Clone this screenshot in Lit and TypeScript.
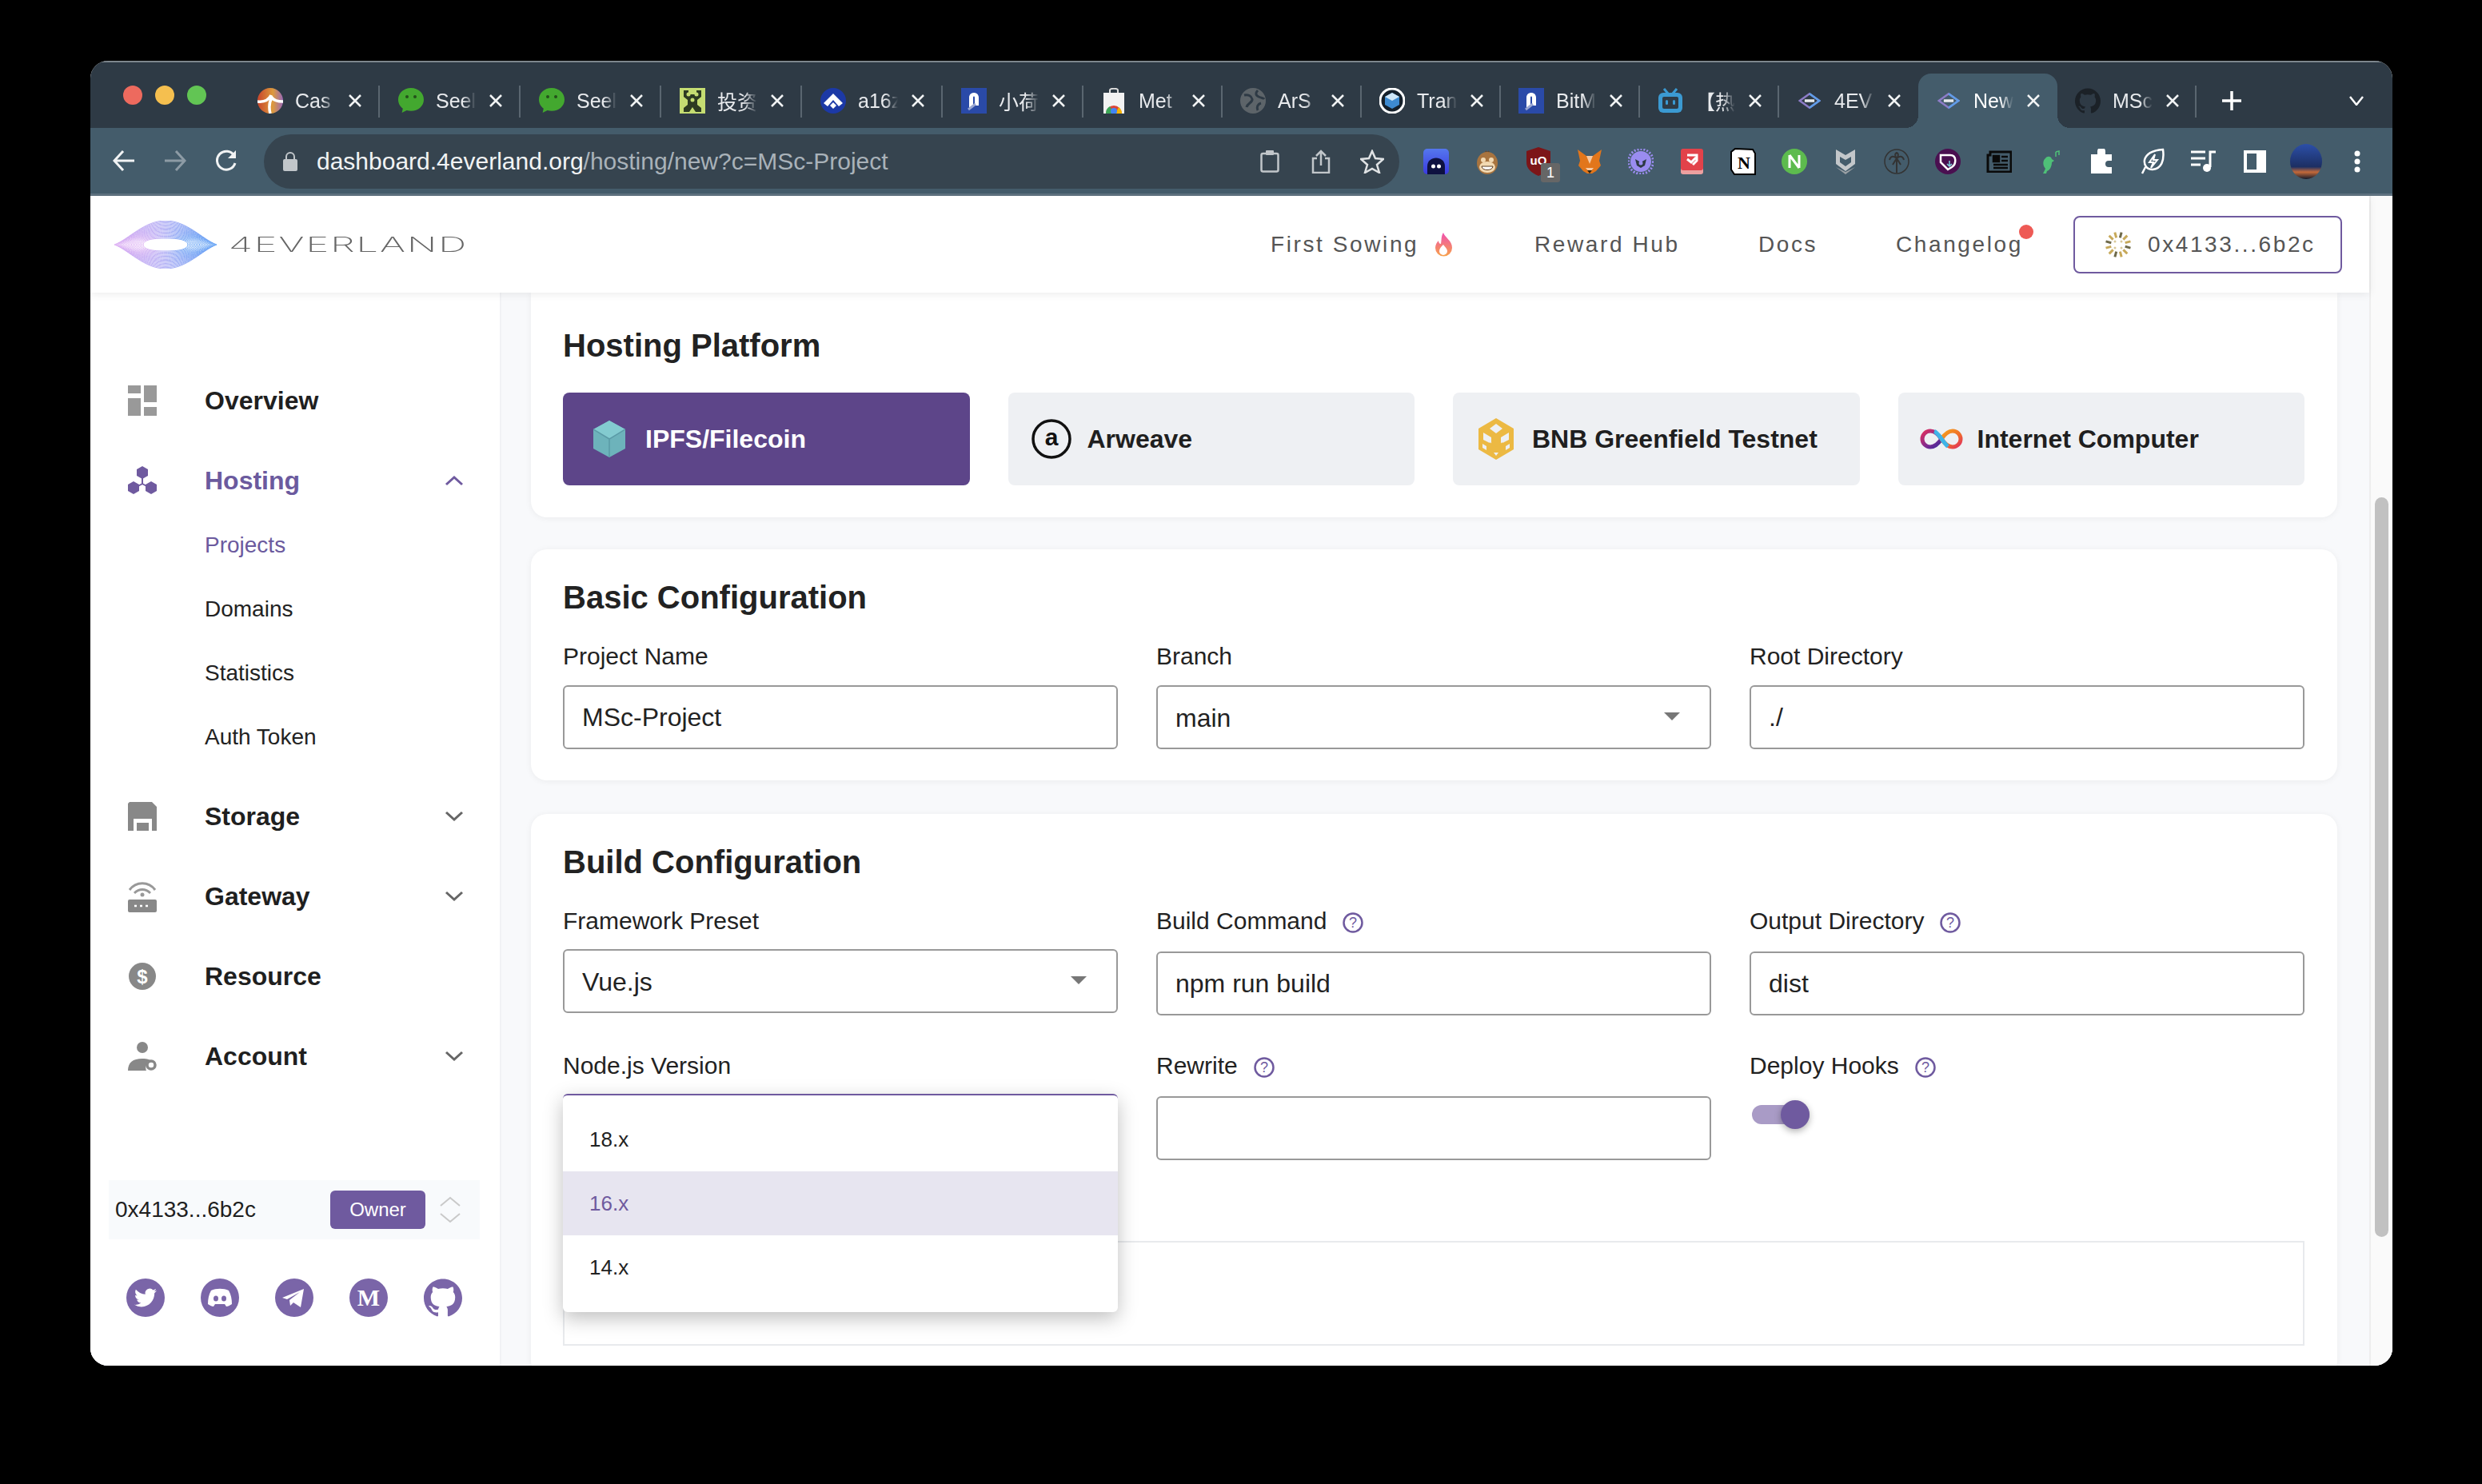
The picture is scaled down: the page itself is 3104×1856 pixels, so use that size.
import { LitElement, css, html, svg } from "lit";
import { customElement } from "lit/decorators.js";

// Tab favicons, all drawn on a 32 box
const wechat = () =>
  html`<svg viewBox="0 0 32 32" width="32" height="32"><path d="M16 0C7 0 0 6.300 0 14.500c0 4.600 2.300 8.700 5.800 11.300L4.600 31l6-3c1.700.5 3.500.8 5.400.8 9 0 16-6.200 16-14.300S25 0 16 0z" fill="#43a82f"/><circle cx="11" cy="11" r="2" fill="#24511b"/><circle cx="21" cy="11" r="2" fill="#24511b"/></svg>`;
const blueZero = () =>
  html`<svg viewBox="0 0 32 32" width="32" height="32"><rect width="32" height="32" fill="#2a4aa8"/><path d="M10 24V12c0-8 12-8 12 0v10h-5V12c0-2-2-2-2 0v12z" fill="#fff"/><path d="M9 27l9-7" stroke="#9aa7d2" stroke-width="3"/></svg>`;
const evDiamond = () =>
  html`<svg viewBox="0 0 32 32" width="28" height="32"><path d="M2 16L16 6l14 10-14 10z" fill="none" stroke="#8d7cc7" stroke-width="3"/><path d="M16 6l14 10-14 10" fill="none" stroke="#5f9de8" stroke-width="3"/><rect x="9" y="14" width="14" height="4" fill="#e8eaed"/></svg>`;

const tabs = [
  {
    label: "Cas",
    icon: html`<svg viewBox="0 0 32 32" width="32" height="32"><defs><linearGradient id="cs" x1="0" x2="1"><stop offset="0" stop-color="#c8452c"/><stop offset=".6" stop-color="#dd9a3c"/><stop offset="1" stop-color="#9a68b8"/></linearGradient></defs><circle cx="16" cy="16" r="16" fill="url(#cs)"/><path d="M0 17c8 1 14-2 17-8M16 32c-2-8-1-15 2-20 2 3 7 5 14 5" fill="none" stroke="#fff" stroke-width="3.500"/></svg>`,
  },
  { label: "Seel", icon: wechat() },
  { label: "Seel", icon: wechat() },
  {
    label: "投资",
    icon: html`<svg viewBox="0 0 32 32" width="32" height="32"><rect width="32" height="32" fill="#c5dd72"/><path d="M5 3h6v5h10V3h6v8l-5 4v6l5 4v5h-7l-4-6-4 6H5v-5l5-4v-6l-5-4z" fill="#2d3b22"/><circle cx="11" cy="8" r="2.500" fill="#c5dd72"/><circle cx="21" cy="8" r="2.500" fill="#c5dd72"/><circle cx="16" cy="15" r="2.500" fill="#c5dd72"/></svg>`,
  },
  {
    label: "a16z",
    icon: html`<svg viewBox="0 0 32 32" width="32" height="32"><circle cx="16" cy="16" r="16" fill="#1c39a6"/><path d="M4 19L16 7l12 12-5 4-7-8-7 8z" fill="#fff"/><path d="M12 22l4-4 4 4-4 4z" fill="#fff"/></svg>`,
  },
  { label: "小荷", icon: blueZero() },
  {
    label: "Met",
    icon: html`<svg viewBox="0 0 32 32" width="32" height="32"><path d="M11 6V3c0-3 10-3 10 0v3" fill="none" stroke="#ddd" stroke-width="2"/><rect x="3" y="6" width="26" height="26" fill="#f2f2f2"/><path d="M6 32a10 10 0 0 1 20 0z" fill="#db4437"/><path d="M6 32a10 10 0 0 1 5-9l5 9z" fill="#3aa757"/><path d="M26 32a10 10 0 0 0-4-8l-4 8z" fill="#f4b400"/><circle cx="16" cy="29" r="4" fill="#4285f4"/></svg>`,
  },
  {
    label: "ArS",
    icon: html`<svg viewBox="0 0 32 32" width="32" height="32"><circle cx="16" cy="16" r="16" fill="#5d6469"/><path d="M5 9c5-1 9 1 10 5s-6 5-7 10M22 3c-3 3-3 6 1 8s6 1 7 3M22 28c-2-4 0-8 4-9" fill="none" stroke="#2e3a45" stroke-width="3"/></svg>`,
  },
  {
    label: "Tran",
    icon: html`<svg viewBox="0 0 32 32" width="32" height="32"><circle cx="16" cy="16" r="15" fill="#15202b" stroke="#fff" stroke-width="3"/><path d="M16 6l9 5v10l-9 5-9-5V11z" fill="#3d8ad0"/><path d="M16 6l9 5-9 5-9-5z" fill="#cfe6f7"/></svg>`,
  },
  { label: "BitM", icon: blueZero() },
  {
    label: "【热",
    icon: html`<svg viewBox="0 0 32 32" width="32" height="32"><path d="M8 1l5 6M24 1l-5 6" stroke="#3b9ad2" stroke-width="3"/><rect x="1" y="6" width="30" height="25" rx="6" fill="#3b9ad2"/><rect x="6" y="11" width="20" height="15" rx="2" fill="#2e3a45"/><rect x="10" y="15" width="3" height="6" rx="1.500" fill="#3b9ad2"/><rect x="19" y="15" width="3" height="6" rx="1.500" fill="#3b9ad2"/></svg>`,
  },
  { label: "4EV", icon: evDiamond() },
  { label: "New", icon: evDiamond(), active: true },
  {
    label: "MSc",
    icon: html`<svg viewBox="0 0 24 24" width="32" height="32"><path fill="#1b2127" d="M12 .297c-6.630 0-12 5.373-12 12 0 5.303 3.438 9.800 8.205 11.385.6.113.82-.258.82-.577 0-.285-.01-1.040-.015-2.040-3.338.724-4.042-1.610-4.042-1.610C4.422 18.070 3.633 17.700 3.633 17.700c-1.087-.744.084-.729.084-.729 1.205.084 1.838 1.236 1.838 1.236 1.070 1.835 2.809 1.305 3.495.998.108-.776.417-1.305.76-1.605-2.665-.3-5.466-1.332-5.466-5.930 0-1.310.465-2.380 1.235-3.220-.135-.303-.54-1.523.105-3.176 0 0 1.005-.322 3.300 1.230.96-.267 1.980-.399 3-.405 1.020.006 2.040.138 3 .405 2.280-1.552 3.285-1.230 3.285-1.230.645 1.653.24 2.873.12 3.176.765.84 1.230 1.910 1.230 3.220 0 4.610-2.805 5.625-5.475 5.920.42.36.81 1.096.81 2.220 0 1.606-.015 2.896-.015 3.286 0 .315.21.69.825.57C20.565 22.092 24 17.592 24 12.297c0-6.627-5.373-12-12-12"/></svg>`,
  },
];

// Browser extension icons, in toolbar order
const extensions = [
  html`<svg viewBox="0 0 32 32" width="32" height="32"><defs><linearGradient id="gh" x1="0" y1="0" x2="0" y2="1"><stop offset="0" stop-color="#5577ee"/><stop offset="1" stop-color="#3a3ae0"/></linearGradient></defs><rect width="32" height="32" rx="5" fill="url(#gh)"/><path d="M5 32V22c0-14 22-14 22 0v10z" fill="#0e1140"/><circle cx="12.500" cy="22" r="2.500" fill="#fff"/><circle cx="19.500" cy="22" r="2.500" fill="#fff"/></svg>`,
  html`<svg viewBox="0 0 32 32" width="32" height="32"><path d="M14 3l2 4 2-4" stroke="#6a4526" stroke-width="2" fill="none"/><ellipse cx="16" cy="18" rx="13" ry="14" fill="#a8743f"/><ellipse cx="16" cy="23" rx="10" ry="7" fill="#f2d9b2"/><circle cx="11" cy="14" r="3" fill="#f2d9b2"/><circle cx="21" cy="14" r="3" fill="#f2d9b2"/><path d="M9 22h14c0 6-14 6-14 0z" fill="#fff" stroke="#5a3a1e"/></svg>`,
  html`<div class="ublock"><svg viewBox="0 0 30 36" width="30" height="36"><path d="M15 0l15 5v14c0 8-6 13-15 17C6 32 0 27 0 19V5z" fill="#7c1518"/><text x="15" y="22" class="ub-text">uO</text></svg><span class="ub-badge">1</span></div>`,
  html`<svg viewBox="0 0 32 32" width="32" height="32"><path d="M1 1l11 8h8l11-8-3 14 2 6-6 7-5 3h-6l-5-3-6-7 2-6z" fill="#e2761b"/><path d="M12 9l4 10 4-10zM11 24l5 6 5-6z" fill="#f6c9a2"/><path d="M13 27h6l-3 4z" fill="#33240f"/></svg>`,
  html`<svg viewBox="0 0 32 32" width="32" height="32"><circle cx="16" cy="16" r="13" fill="#9a8cf0"/><circle cx="16" cy="16" r="15.500" fill="none" stroke="#9a8cf0" stroke-width="3" stroke-dasharray="2 2"/><path d="M9 13l7 4 7-4-2 8-5 3-5-3z" fill="#2e3a45"/><circle cx="16" cy="18" r="2.500" fill="#9a8cf0"/></svg>`,
  html`<svg viewBox="0 0 28 32" width="28" height="32"><rect y="4" width="28" height="28" rx="3" fill="#eca0a0"/><rect width="28" height="27" rx="3" fill="#e2424a"/><path d="M8 8h12v7l-5 5M8 13l5 4 6-6" fill="none" stroke="#fff" stroke-width="3"/></svg>`,
  html`<svg viewBox="0 0 32 34" width="32" height="34"><path d="M6 1l22 1 3 5v26H5l-4-6V5z" fill="#fff" stroke="#000" stroke-width="2"/><text x="17" y="26" class="notion-text">N</text></svg>`,
  html`<svg viewBox="0 0 32 32" width="32" height="32"><circle cx="16" cy="16" r="16" fill="#5dbb4e"/><path d="M10 8v16M10 8l12 16M22 8v16" stroke="#fff" stroke-width="3" fill="none"/></svg>`,
  html`<svg viewBox="0 0 24 32" width="24" height="32"><path d="M0 1l12 7 12-7v18l-12 9L0 19z" fill="#c3c7ca"/><path d="M5 10l7 4 7-4v7l-7 5-7-5z" fill="#445c6b"/><path d="M0 23l12 9 12-9-12 6z" fill="#9aa0a4"/></svg>`,
  html`<svg viewBox="0 0 32 32" width="32" height="32"><circle cx="16" cy="16" r="15" fill="none" stroke="#333" stroke-width="1.500"/><path d="M16 30V12M16 12c-5-4-8-2-9 2M16 12c5-4 8-2 9 2M16 12c-3-4-2-6 0-7 2 1 3 3 0 7M16 12l-5 8M16 12l5 8" fill="none" stroke="#333" stroke-width="2"/></svg>`,
  html`<svg viewBox="0 0 32 32" width="32" height="32"><circle cx="16" cy="16" r="16" fill="#4a0f50"/><path d="M7 8h12c8 0 8 11 2 15l-5 3-9-9z" fill="none" stroke="#fff" stroke-width="2.500"/><path d="M18 15v7M15 19l3 3 3-3" fill="none" stroke="#7fd4e0" stroke-width="1.500"/></svg>`,
  html`<svg viewBox="0 0 32 28" width="32" height="28"><path d="M5 2h26v25H2V6h3z" fill="none" stroke="#0a0a0a" stroke-width="3"/><path d="M9 7h7v7H9zM19 8h8M19 13h8M9 18h18M9 22h18" stroke="#0a0a0a" stroke-width="2.500" fill="#0a0a0a"/></svg>`,
  html`<svg viewBox="0 0 26 30" width="26" height="30"><path d="M4 30l3-6c-4-5-3-11 0-13 2-3 7-3 8 1l3 2-3 2c0 6-3 10-6 11l-1 3z" fill="#4fc078"/><path d="M20 3v6M20 3l4-1v5" stroke="#4fc078" stroke-width="1.500" fill="none"/></svg>`,
  html`<svg viewBox="0 0 30 32" width="30" height="32"><path d="M10 8V4a5 5 0 0 1 10 0v4h8v8h-4a4 4 0 0 0 0 8h4v8H2V8z" transform="translate(0 -1)" fill="#fff"/></svg>`,
  html`<svg viewBox="0 0 30 34" width="30" height="34"><path d="M28 2c2 14-2 24-13 25C8 27 4 22 5 15 7 7 16 3 28 2zM6 24l-4 8" fill="none" stroke="#fff" stroke-width="2.500"/><path d="M18 8l-7 10h5l-3 7 8-10h-5z" fill="none" stroke="#fff" stroke-width="2"/></svg>`,
  html`<svg viewBox="0 0 32 30" width="32" height="30"><path d="M0 3h18M0 11h18M0 19h12" stroke="#fff" stroke-width="3"/><path d="M24 22V3h7" stroke="#fff" stroke-width="3" fill="none"/><circle cx="20" cy="23" r="5" fill="#fff"/></svg>`,
  html`<svg viewBox="0 0 28 28" width="28" height="28"><rect width="28" height="28" fill="#fff"/><rect x="4" y="4" width="12" height="20" fill="#445c6b"/></svg>`,
  html`<svg viewBox="0 0 40 44" width="40" height="44"><defs><linearGradient id="av" x1="0" y1="0" x2="0" y2="1"><stop offset="0" stop-color="#2c4fa8"/><stop offset=".65" stop-color="#1c2f63"/><stop offset=".8" stop-color="#c46a3a"/><stop offset="1" stop-color="#131a2c"/></linearGradient></defs><ellipse cx="20" cy="22" rx="20" ry="22" fill="url(#av)"/></svg>`,
  html`<svg viewBox="0 0 8 28" width="8" height="28"><circle cx="4" cy="4" r="3.500" fill="#fff"/><circle cx="4" cy="14" r="3.500" fill="#fff"/><circle cx="4" cy="24" r="3.500" fill="#fff"/></svg>`,
];

const chevron = (up = false) =>
  html`<svg class="chev" viewBox="0 0 24 14" width="24" height="14"><path d=${up ? "M2 12l10-9 10 9" : "M2 2l10 9 10-9"} fill="none" stroke="currentColor" stroke-width="3"/></svg>`;

const help = () =>
  html`<svg class="help" viewBox="0 0 26 26" width="26" height="26"><circle cx="13" cy="13" r="11.500" fill="none" stroke="#6f5a9f" stroke-width="2.500"/><text x="13" y="19" class="help-text">?</text></svg>`;

const caret = () =>
  html`<svg class="caret" viewBox="0 0 20 10" width="20" height="10"><path d="M0 0h20L10 10z" fill="#777"/></svg>`;

const navIcons: Record<string, unknown> = {
  overview: html`<svg viewBox="0 0 36 38" width="36" height="38"><path d="M0 0h16v10H0zM0 16h16v22H0zM20 0h16v21H20zM20 27h16v11H20z" fill="#999"/></svg>`,
  hosting: html`<svg viewBox="0 0 36 36" width="36" height="36"><path d="M18 0l7 4v8l-7 4-7-4V4zM7 19l7 4v8l-7 4-7-4v-8zM29 19l7 4v8l-7 4-7-4v-8z" fill="#6f5a9f"/><path d="M18 14v8M18 22l-9 5M18 22l9 5" stroke="#6f5a9f" stroke-width="2"/></svg>`,
  storage: html`<svg viewBox="0 0 36 36" width="36" height="36"><path d="M2 0h28l6 6v30h-6V21H7v15H0V2z" fill="#888"/><rect x="11" y="26" width="15" height="10" fill="#888"/></svg>`,
  gateway: html`<svg viewBox="0 0 36 40" width="36" height="40"><path d="M2 12C10 1 26 1 34 12M8 16c6-6 14-6 20 0" fill="none" stroke="#999" stroke-width="3"/><circle cx="18" cy="18" r="2.500" fill="#999"/><rect y="24" width="36" height="16" rx="2" fill="#888"/><path d="M8 32h3M15 32h3M22 32h3" stroke="#fff" stroke-width="2.500"/></svg>`,
  resource: html`<svg viewBox="0 0 36 36" width="36" height="36"><circle cx="18" cy="18" r="17" fill="#888"/><text x="18" y="27" class="dollar">$</text></svg>`,
  account: html`<svg viewBox="0 0 36 36" width="36" height="36"><circle cx="18" cy="7" r="7" fill="#888"/><path d="M0 36c0-10 6-15 18-15 6 0 10 1 13 4-8 1-10 6-8 11z" fill="#888"/><circle cx="29" cy="29" r="5" fill="none" stroke="#888" stroke-width="3.500"/></svg>`,
};

const menu = [
  { name: "Overview", icon: "overview" },
  {
    name: "Hosting",
    icon: "hosting",
    open: true,
    sub: ["Projects", "Domains", "Statistics", "Auth Token"],
  },
  { name: "Storage", icon: "storage", more: true },
  { name: "Gateway", icon: "gateway", more: true },
  { name: "Resource", icon: "resource" },
  { name: "Account", icon: "account", more: true },
];

const socials = [
  html`<svg viewBox="0 0 48 48" width="48" height="48"><circle cx="24" cy="24" r="24" fill="#7a65a8"/><svg x="10" y="10" width="28" height="28" viewBox="0 0 24 24"><path fill="#fff" d="M23.953 4.570a10 10 0 01-2.825.775 4.958 4.958 0 002.163-2.723c-.951.555-2.005.959-3.127 1.184a4.920 4.920 0 00-8.384 4.482C7.690 8.095 4.067 6.130 1.640 3.162a4.822 4.822 0 00-.666 2.475c0 1.710.87 3.213 2.188 4.096a4.904 4.904 0 01-2.228-.616v.06a4.923 4.923 0 003.946 4.827 4.996 4.996 0 01-2.212.085 4.936 4.936 0 004.604 3.417 9.867 9.867 0 01-6.102 2.105c-.39 0-.779-.023-1.170-.067a13.995 13.995 0 007.557 2.209c9.053 0 13.998-7.496 13.998-13.985 0-.21 0-.42-.015-.63A9.935 9.935 0 0024 4.590z"/></svg></svg>`,
  html`<svg viewBox="0 0 48 48" width="48" height="48"><circle cx="24" cy="24" r="24" fill="#7a65a8"/><path d="M13 15c6-3 16-3 22 0 3 5 4 11 4 17-3 2-5 3-7 3l-2-3H18l-2 3c-2 0-4-1-7-3 0-6 1-12 4-17z" fill="#fff"/><ellipse cx="19" cy="25" rx="3" ry="3.500" fill="#7a65a8"/><ellipse cx="29" cy="25" rx="3" ry="3.500" fill="#7a65a8"/></svg>`,
  html`<svg viewBox="0 0 48 48" width="48" height="48"><circle cx="24" cy="24" r="24" fill="#7a65a8"/><path d="M9 24l27-11-4 23-9-6-4 4-1-7 13-10-16 9z" fill="#fff"/></svg>`,
  html`<svg viewBox="0 0 48 48" width="48" height="48"><circle cx="24" cy="24" r="24" fill="#7a65a8"/><text x="24" y="34" class="medium">M</text></svg>`,
  html`<svg viewBox="0 0 24 24" width="48" height="48"><circle cx="12" cy="12" r="11" fill="#fff"/><path fill="#7a65a8" d="M12 .297c-6.630 0-12 5.373-12 12 0 5.303 3.438 9.800 8.205 11.385.6.113.82-.258.82-.577 0-.285-.01-1.040-.015-2.040-3.338.724-4.042-1.610-4.042-1.610C4.422 18.070 3.633 17.700 3.633 17.700c-1.087-.744.084-.729.084-.729 1.205.084 1.838 1.236 1.838 1.236 1.070 1.835 2.809 1.305 3.495.998.108-.776.417-1.305.76-1.605-2.665-.3-5.466-1.332-5.466-5.930 0-1.310.465-2.380 1.235-3.220-.135-.303-.54-1.523.105-3.176 0 0 1.005-.322 3.300 1.230.96-.267 1.980-.399 3-.405 1.020.006 2.040.138 3 .405 2.280-1.552 3.285-1.230 3.285-1.230.645 1.653.24 2.873.12 3.176.765.84 1.230 1.910 1.230 3.220 0 4.610-2.805 5.625-5.475 5.920.42.36.81 1.096.81 2.220 0 1.606-.015 2.896-.015 3.286 0 .315.21.69.825.57C20.565 22.092 24 17.592 24 12.297c0-6.627-5.373-12-12-12"/></svg>`,
];

const platforms = [
  {
    name: "IPFS/Filecoin",
    active: true,
    icon: html`<svg viewBox="0 0 40 46" width="40" height="46"><path d="M20 0l20 11v24L20 46 0 35V11z" fill="#6db3bb"/><path d="M20 0l20 11-20 12L0 11z" fill="#83cbd0"/><path d="M20 23v23M20 23L0 11M20 23l20-12" stroke="#5a9aa6" stroke-width="1.500" fill="none"/></svg>`,
  },
  {
    name: "Arweave",
    icon: html`<svg viewBox="0 0 50 50" width="50" height="50"><circle cx="25" cy="25" r="23" fill="none" stroke="#111" stroke-width="3.500"/><text x="25" y="33" class="ar-text">a</text></svg>`,
  },
  {
    name: "BNB Greenfield Testnet",
    icon: html`<svg viewBox="0 0 44 52" width="44" height="52"><path d="M22 0l22 13v26L22 52 0 39V13z" fill="#ecb943"/><path d="M22 7l8 6-8 6-8-6zM6 18l10 6v8l-10-5zM38 18l-10 6v8l10-5z" fill="#eef0f3"/><path d="M14 30l8 6 8-6v10l-8 6-8-6z" fill="#ecb943"/><path d="M22 47l-3-4h6zM5 32l5 3v5l-5-3zM39 32l-5 3v5l5-3z" fill="#eef0f3"/></svg>`,
  },
  {
    name: "Internet Computer",
    icon: html`<svg viewBox="0 0 56 28" width="56" height="28"><defs><linearGradient id="ic1" x1="0" x2="1" y1="0" y2="1"><stop offset="0" stop-color="#e0305f"/><stop offset=".6" stop-color="#7a2a92"/><stop offset="1" stop-color="#3a2a9a"/></linearGradient><linearGradient id="ic2" x1="0" x2="1" y1="0" y2="1"><stop offset="0" stop-color="#f6a31c"/><stop offset=".6" stop-color="#ef6a2c"/><stop offset="1" stop-color="#e0305f"/></linearGradient></defs><path d="M28 14C24 8 20 4 14 4A10 10 0 0 0 14 24C20 24 24 20 28 14" fill="none" stroke="url(#ic1)" stroke-width="5"/><path d="M28 14C32 8 36 4 42 4A10 10 0 0 1 42 24C36 24 32 20 28 14" fill="none" stroke="url(#ic2)" stroke-width="5"/><path d="M19 4.500C24 6 30 18 36 23.500" fill="none" stroke="#3eb4e8" stroke-width="5"/></svg>`,
  },
];

// concentric spindle lines of the logo mark, from the outer diamond
// down to the rounded box in the middle
const logoLines = Array.from({ length: 18 }, (_, i) => {
  const t = i / 17;
  const hw = 64 - 36 * t;
  const hh = 30 - 22 * t;
  const cx = 0.72 + 0.26 * t;
  const cy = 0.22 + 0.68 * t;
  const s = (x: number, y: number) => `${(64 + x).toFixed(1)} ${(30 + y).toFixed(1)}`;
  return [
    `M${s(-hw, 0)}`,
    `C${s(-hw * cx, -hh * cy)} ${s(-hw * 0.42, -hh)} ${s(0, -hh)}`,
    `C${s(hw * 0.42, -hh)} ${s(hw * cx, -hh * cy)} ${s(hw, 0)}`,
    `C${s(hw * cx, hh * cy)} ${s(hw * 0.42, hh)} ${s(0, hh)}`,
    `C${s(-hw * 0.42, hh)} ${s(-hw * cx, hh * cy)} ${s(-hw, 0)}z`,
  ].join(" ");
});

const walletRays = Array.from({ length: 12 }, (_, i) => {
  const a = (i * Math.PI) / 6 + 0.26;
  return {
    x1: 17 + Math.cos(a) * 9,
    y1: 17 + Math.sin(a) * 9,
    x2: 17 + Math.cos(a) * 16,
    y2: 17 + Math.sin(a) * 16,
    c: i % 3 === 0 ? "#6f6a4a" : "#c7a95a",
  };
});

@customElement("app-root")
export class AppRoot extends LitElement {
  static styles = css`
    :host {
      display: block;
      width: 3104px;
      height: 1856px;
      background: #000;
      padding: 76px 112px 148px 113px;
      box-sizing: border-box;
      font-family: "Liberation Sans", Arial, sans-serif;
      color: #1f1f1f;
    }
    .window {
      height: 100%;
      border-radius: 22px;
      overflow: hidden;
      display: flex;
      flex-direction: column;
      background: #fff;
    }

    /* tab strip */
    .tabstrip {
      height: 84px;
      background: #2e3a45;
      border-top: 2px solid #7d868d;
      box-sizing: border-box;
      display: flex;
      align-items: flex-end;
      flex: none;
    }
    .lights {
      width: 186px;
      height: 82px;
      display: flex;
      gap: 16px;
      padding: 29px 0 0 41px;
      box-sizing: border-box;
      align-self: flex-start;
      flex: none;
    }
    .lights span {
      width: 24px;
      height: 24px;
      border-radius: 50%;
    }
    .red {
      background: #ed6a5e;
    }
    .yellow {
      background: #f5bf4f;
    }
    .green {
      background: #62c554;
    }
    .tab {
      width: 174px;
      height: 68px;
      box-sizing: border-box;
      padding: 0 0 0 22px;
      display: flex;
      align-items: center;
      flex: none;
      position: relative;
      color: #e8eaed;
      font-size: 25px;
    }
    .tab.wide {
      width: 176px;
      padding-left: 23px;
    }
    .tab::after {
      content: "";
      position: absolute;
      right: 0;
      top: 15px;
      height: 40px;
      width: 2px;
      background: #5a6670;
    }
    .tab.active {
      background: #445c6b;
      border-radius: 16px 16px 0 0;
      color: #fff;
    }
    .tab.before-active::after {
      display: none;
    }
    .tab.active::before,
    .tab.active::after {
      content: "";
      position: absolute;
      top: auto;
      bottom: 0;
      width: 16px;
      height: 16px;
    }
    .tab.active::before {
      left: -16px;
      background: radial-gradient(circle at 0 0, transparent 16px, #445c6b 16px);
    }
    .tab.active::after {
      right: -16px;
      background: radial-gradient(circle at 100% 0, transparent 16px, #445c6b 16px);
    }
    .fav {
      width: 32px;
      height: 32px;
      display: flex;
      justify-content: center;
      flex: none;
    }
    .tab-title {
      width: 54px;
      margin-left: 15px;
      overflow: hidden;
      white-space: nowrap;
      font-family: "Liberation Sans", "Noto Sans CJK SC", sans-serif;
      -webkit-mask-image: linear-gradient(90deg, #000 34px, transparent 50px);
      mask-image: linear-gradient(90deg, #000 34px, transparent 50px);
      flex: none;
    }
    .tab-x {
      margin-left: 13px;
      flex: none;
    }
    .new-tab {
      margin-left: 32px;
      align-self: center;
      margin-top: 14px;
      flex: none;
    }
    .tab-menu {
      margin-left: 135px;
      align-self: center;
      margin-top: 14px;
      flex: none;
    }

    /* toolbar */
    .toolbar {
      height: 85px;
      background: #445c6b;
      border-bottom: 3px solid #5f7280;
      box-sizing: border-box;
      display: flex;
      align-items: center;
      flex: none;
      padding-left: 28px;
    }
    .navbtn {
      width: 64px;
      display: flex;
      justify-content: flex-start;
      flex: none;
    }
    .omni {
      width: 1420px;
      height: 68px;
      margin-left: -3px;
      margin-top: 1px;
      border-radius: 34px;
      background: #36444f;
      display: flex;
      align-items: center;
      padding-left: 24px;
      box-sizing: border-box;
      flex: none;
    }
    .url {
      margin-left: 24px;
      font-size: 30px;
      color: #a9b2b9;
      flex: 1;
      white-space: nowrap;
    }
    .url b {
      font-weight: 400;
      color: #f1f3f4;
    }
    .omni-actions {
      display: flex;
      align-items: center;
      padding-right: 2px;
    }
    .omni-actions span {
      width: 64px;
      display: flex;
      justify-content: center;
    }
    .exts {
      display: flex;
      margin-left: 14px;
      margin-top: 1px;
    }
    .ext {
      width: 64px;
      height: 44px;
      display: flex;
      align-items: center;
      justify-content: center;
      flex: none;
    }
    .ublock {
      position: relative;
      height: 36px;
    }
    .ub-text {
      font: 700 15px "Liberation Sans", sans-serif;
      fill: #fff;
      text-anchor: middle;
    }
    .ub-badge {
      position: absolute;
      left: 18px;
      top: 20px;
      width: 24px;
      height: 24px;
      background: #666;
      color: #fff;
      border-radius: 3px;
      font-size: 18px;
      line-height: 24px;
      text-align: center;
    }
    .notion-text {
      font: 700 22px "Liberation Serif", serif;
      fill: #000;
      text-anchor: middle;
    }

    /* page */
    .page {
      flex: 1;
      min-height: 0;
      display: flex;
      background: #f8f9fb;
    }
    .content {
      flex: 1;
      min-width: 0;
      display: flex;
      flex-direction: column;
    }
    .header {
      height: 121px;
      background: #fff;
      box-shadow: 0 2px 10px rgba(0, 0, 0, 0.08);
      display: flex;
      align-items: center;
      position: relative;
      z-index: 3;
      flex: none;
      padding-left: 30px;
      color: #555;
    }
    .logo {
      display: flex;
      align-items: center;
      width: 1446px;
      flex: none;
    }
    .wordmark {
      display: inline-block;
      margin-left: 15px;
      font-family: Inter, sans-serif;
      font-weight: 200;
      font-size: 25px;
      line-height: 30px;
      letter-spacing: 1px;
      color: #666;
      transform: scaleX(1.95);
      transform-origin: left center;
    }
    .hnav {
      font-size: 28px;
      letter-spacing: 2.6px;
      white-space: nowrap;
    }
    .sowing {
      display: flex;
      align-items: center;
      gap: 20px;
      width: 330px;
      flex: none;
    }
    .reward {
      width: 280px;
      flex: none;
    }
    .docs {
      width: 172px;
      flex: none;
    }
    .changelog {
      width: 222px;
      flex: none;
      position: relative;
    }
    .changelog i {
      position: absolute;
      left: 154px;
      top: -9px;
      width: 18px;
      height: 18px;
      border-radius: 50%;
      background: #ee5a55;
    }
    .wallet {
      width: 336px;
      height: 72px;
      box-sizing: border-box;
      border: 2px solid #6f5a9f;
      border-radius: 8px;
      display: flex;
      align-items: center;
      padding-left: 37px;
      gap: 20px;
      flex: none;
    }
    .body {
      flex: 1;
      min-height: 0;
      display: flex;
    }
    .sidebar {
      width: 512px;
      flex: none;
      background: #fff;
      box-sizing: border-box;
      padding: 85px 24px 0 47px;
      display: flex;
      flex-direction: column;
      box-shadow: 2px 0 0 #f1f2f5;
      position: relative;
      z-index: 1;
    }
    .item {
      height: 100px;
      display: flex;
      align-items: center;
      font-size: 32px;
      font-weight: 700;
    }
    .item .ico {
      width: 36px;
      display: flex;
      justify-content: center;
      flex: none;
    }
    .item .name {
      margin-left: 60px;
      flex: 1;
    }
    .item.open {
      color: #6b5a9e;
    }
    .chev {
      color: #666;
      margin-right: 21px;
      flex: none;
    }
    .open .chev {
      color: #6f5a9f;
    }
    .subitems {
      display: flex;
      flex-direction: column;
      margin-top: -9px;
      margin-bottom: 9px;
    }
    .subitem {
      height: 80px;
      line-height: 80px;
      padding-left: 96px;
      font-size: 28px;
      color: #222;
    }
    .subitem.current {
      color: #6b5a9e;
    }
    .owner {
      margin: 105px 0 0 -24px;
      height: 74px;
      width: 464px;
      background: #f8fafc;
      display: flex;
      align-items: center;
      box-sizing: border-box;
      padding-left: 8px;
      font-size: 28px;
    }
    .owner-addr {
      width: 269px;
      flex: none;
    }
    .owner-badge {
      width: 119px;
      height: 48px;
      border-radius: 6px;
      background: #6f5a9f;
      color: #fff;
      font-size: 24px;
      line-height: 48px;
      text-align: center;
      flex: none;
    }
    .updown {
      margin-left: 18px;
      flex: none;
    }
    .socials {
      display: flex;
      gap: 45px;
      margin: 49px 0 0 -2px;
    }
    .socials span {
      display: flex;
    }
    .main {
      flex: 1;
      min-width: 0;
      overflow: hidden;
      padding: 0 40px 0 39px;
      position: relative;
    }
    .card {
      background: #fff;
      border-radius: 20px;
      box-shadow: 0 1px 8px rgba(0, 0, 0, 0.06);
      padding: 34px 41px 39px 40px;
      margin-bottom: 42px;
    }
    .card.top {
      border-radius: 0 0 20px 20px;
      padding-top: 40px;
      padding-bottom: 40px;
      margin-bottom: 40px;
    }
    h2 {
      margin: 0;
      font-size: 40px;
      line-height: 52px;
      font-weight: 700;
      color: #222;
    }
    .platforms {
      display: grid;
      grid-template-columns: repeat(4, 1fr);
      gap: 48px;
      margin-top: 33px;
    }
    .platform {
      height: 116px;
      border-radius: 8px;
      background: #eef0f3;
      display: flex;
      align-items: center;
      padding-left: 26px;
      font-size: 32px;
      font-weight: 700;
      color: #1f1f1f;
    }
    .platform.active {
      background: #5d4589;
      color: #fff;
      padding-left: 30px;
    }
    .platform-ico {
      width: 56px;
      display: flex;
      justify-content: center;
      margin-right: 17px;
      flex: none;
    }
    .ar-text {
      font: 700 30px "Liberation Sans", sans-serif;
      fill: #111;
      text-anchor: middle;
    }
    .fields {
      display: grid;
      grid-template-columns: repeat(3, 694px);
      column-gap: 48px;
      row-gap: 45px;
      margin-top: 30px;
    }
    .field {
      position: relative;
      min-width: 0;
    }
    .label {
      height: 36px;
      display: flex;
      align-items: center;
      font-size: 30px;
      white-space: nowrap;
      color: #222;
    }
    .help {
      margin-left: 20px;
      margin-top: 3px;
      flex: none;
    }
    .help-text {
      font: 400 18px "Liberation Sans", sans-serif;
      fill: #6f5a9f;
      text-anchor: middle;
    }
    .input {
      height: 80px;
      margin-top: 17px;
      box-sizing: border-box;
      border: 2px solid #999;
      border-radius: 6px;
      padding: 0 22px;
      display: flex;
      align-items: center;
      justify-content: space-between;
      font-size: 32px;
      color: #222;
      background: #fff;
    }
    .input.select {
      padding-top: 3px;
    }
    .basic .input {
      margin-top: 18px;
    }
    .caret {
      margin-right: 15px;
      margin-top: -5px;
    }
    .fields .input.low {
      margin-top: 20px;
    }
    .fields .input.lower {
      margin-top: 20px;
    }
    .toggle {
      position: relative;
      margin-top: 31px;
      width: 72px;
      height: 24px;
      margin-left: 3px;
      border-radius: 12px;
      background: #a99bc6;
    }
    .toggle::after {
      content: "";
      position: absolute;
      right: 0;
      top: -6px;
      width: 36px;
      height: 36px;
      border-radius: 50%;
      background: #6f5a9f;
      box-shadow: 0 3px 8px rgba(0, 0, 0, 0.3);
    }
    .dropdown {
      position: absolute;
      left: 0;
      right: 0;
      top: 53px;
      height: 273px;
      box-sizing: border-box;
      background: #fff;
      border-top: 2px solid #6f5a9f;
      border-radius: 6px;
      box-shadow: 0 8px 24px rgba(0, 0, 0, 0.25);
      padding-top: 15px;
      z-index: 2;
      font-size: 26px;
    }
    .option {
      height: 80px;
      line-height: 80px;
      padding-left: 33px;
      color: #222;
    }
    .option.selected {
      background: #e7e5f0;
      color: #6f5a9f;
    }
    .editor {
      height: 131px;
      margin-top: 101px;
      border: 2px solid #e8eaed;
      box-sizing: border-box;
    }
    .scrollbar {
      width: 29px;
      flex: none;
      background: #fafafa;
      border-left: 2px solid #eeeeee;
      box-sizing: border-box;
      padding: 377px 5px 0 5px;
    }
    .thumb {
      height: 925px;
      border-radius: 9px;
      background: #c1c1c1;
    }
    .dollar {
      font: 700 24px "Liberation Sans", sans-serif;
      fill: #fff;
      text-anchor: middle;
    }
    .medium {
      font: 700 30px "Liberation Serif", serif;
      fill: #fff;
      text-anchor: middle;
    }
  `;

  private _renderTab(tab: (typeof tabs)[number], i: number) {
    const beforeActive = tabs[i + 1]?.active;
    return html`
      <div class="tab ${i < 6 ? "wide" : ""} ${tab.active ? "active" : ""} ${beforeActive ? "before-active" : ""}">
        <span class="fav">${tab.icon}</span>
        <span class="tab-title">${tab.label}</span>
        <svg class="tab-x" viewBox="0 0 16 16" width="16" height="16">
          <path d="M1 1l14 14M15 1L1 15" stroke="#f1f3f4" stroke-width="2.5" />
        </svg>
      </div>
    `;
  }

  private _renderHeader() {
    return html`
      <div class="header">
        <div class="logo">
          <svg viewBox="0 0 128 60" width="128" height="60">
            <defs>
              <linearGradient id="lg" x1="0" x2="1" y1="0" y2="0">
                <stop offset="0" stop-color="#d59cf0" />
                <stop offset=".5" stop-color="#9d9cf2" />
                <stop offset="1" stop-color="#3f8df2" />
              </linearGradient>
            </defs>
            ${logoLines.map(
              (d) => svg`<path d=${d} fill="none" stroke="url(#lg)" stroke-width=".8" />`
            )}
          </svg>
          <span class="wordmark">4EVERLAND</span>
        </div>
        <div class="hnav sowing">
          First Sowing
          <svg viewBox="0 0 24 30" width="24" height="30">
            <defs>
              <linearGradient id="fl" x1="0" x2="0" y1="0" y2="1">
                <stop offset="0" stop-color="#f04fb0" />
                <stop offset="1" stop-color="#f7a24a" />
              </linearGradient>
            </defs>
            <path d="M11 0c2 6 11 10 11 19a10.500 10.500 0 0 1-21 0c0-4 2-7 4-9 0 2 1 4 3 4 1-5 0-9 3-14zM11 15c-3 3-5 5-5 8a5 5 0 0 0 10 0c0-3-3-5-5-8z" fill="url(#fl)" fill-rule="evenodd" />
          </svg>
        </div>
        <div class="hnav reward">Reward Hub</div>
        <div class="hnav docs">Docs</div>
        <div class="hnav changelog">Changelog<i></i></div>
        <div class="wallet hnav">
          <svg viewBox="0 0 34 34" width="34" height="34">
            ${walletRays.map(
              (r) => svg`<line x1=${r.x1} y1=${r.y1} x2=${r.x2} y2=${r.y2} stroke=${r.c} stroke-width="3" />`
            )}
            <circle cx="13" cy="13" r="1.500" fill="#d9c99a" />
            <circle cx="21" cy="13" r="1.500" fill="#d9c99a" />
            <circle cx="13" cy="21" r="1.500" fill="#d9c99a" />
            <circle cx="21" cy="21" r="1.500" fill="#d9c99a" />
          </svg>
          0x4133...6b2c
        </div>
      </div>
    `;
  }

  private _renderSidebar() {
    return html`
      <aside class="sidebar">
        ${menu.map(
          (m) => html`
            <div class="item ${m.open ? "open" : ""}">
              <span class="ico">${navIcons[m.icon]}</span>
              <span class="name">${m.name}</span>
              ${m.open ? chevron(true) : m.more ? chevron() : ""}
            </div>
            ${m.sub
              ? html`<div class="subitems">
                  ${m.sub.map(
                    (s, i) => html`<div class="subitem ${i === 0 ? "current" : ""}">${s}</div>`
                  )}
                </div>`
              : ""}
          `
        )}
        <div class="owner">
          <span class="owner-addr">0x4133...6b2c</span>
          <span class="owner-badge">Owner</span>
          <svg class="updown" viewBox="0 0 26 36" width="26" height="36">
            <path d="M1 13L13 3l12 10M1 23l12 10 12-10" fill="none" stroke="#c9c9c9" stroke-width="2" />
          </svg>
        </div>
        <div class="socials">${socials.map((s) => html`<span>${s}</span>`)}</div>
      </aside>
    `;
  }

  private _renderMain() {
    return html`
      <main class="main">
        <section class="card top">
          <h2>Hosting Platform</h2>
          <div class="platforms">
            ${platforms.map(
              (p) => html`
                <div class="platform ${p.active ? "active" : ""}">
                  <span class="platform-ico">${p.icon}</span>${p.name}
                </div>
              `
            )}
          </div>
        </section>

        <section class="card">
          <h2>Basic Configuration</h2>
          <div class="fields basic">
            <div class="field">
              <div class="label">Project Name</div>
              <div class="input">MSc-Project</div>
            </div>
            <div class="field">
              <div class="label">Branch</div>
              <div class="input select">main ${caret()}</div>
            </div>
            <div class="field">
              <div class="label">Root Directory</div>
              <div class="input">./</div>
            </div>
          </div>
        </section>

        <section class="card">
          <h2>Build Configuration</h2>
          <div class="fields">
            <div class="field">
              <div class="label">Framework Preset</div>
              <div class="input select">Vue.js ${caret()}</div>
            </div>
            <div class="field">
              <div class="label">Build Command ${help()}</div>
              <div class="input low">npm run build</div>
            </div>
            <div class="field">
              <div class="label">Output Directory ${help()}</div>
              <div class="input low">dist</div>
            </div>
            <div class="field">
              <div class="label">Node.js Version</div>
              <div class="dropdown">
                <div class="option">18.x</div>
                <div class="option selected">16.x</div>
                <div class="option">14.x</div>
              </div>
            </div>
            <div class="field">
              <div class="label">Rewrite ${help()}</div>
              <div class="input lower"></div>
            </div>
            <div class="field">
              <div class="label">Deploy Hooks ${help()}</div>
              <div class="toggle"></div>
            </div>
          </div>
          <div class="editor"></div>
        </section>
      </main>
    `;
  }

  render() {
    return html`
      <div class="window">
        <div class="tabstrip">
          <div class="lights">
            <span class="red"></span><span class="yellow"></span><span class="green"></span>
          </div>
          ${tabs.map((t, i) => this._renderTab(t, i))}
          <svg class="new-tab" viewBox="0 0 24 24" width="24" height="24">
            <path d="M12 0v24M0 12h24" stroke="#fff" stroke-width="3.500" />
          </svg>
          <svg class="tab-menu" viewBox="0 0 18 12" width="18" height="12">
            <path d="M1 1l8 10 8-10" fill="none" stroke="#fff" stroke-width="2.500" />
          </svg>
        </div>
        <div class="toolbar">
          <span class="navbtn">
            <svg viewBox="0 0 28 26" width="28" height="26"><path d="M27 13H2M13 1L2 13l11 12" fill="none" stroke="#f1f3f4" stroke-width="3" /></svg>
          </span>
          <span class="navbtn">
            <svg viewBox="0 0 28 26" width="28" height="26"><path d="M1 13h25M15 1l11 12-11 12" fill="none" stroke="#8d9ba5" stroke-width="3" /></svg>
          </span>
          <span class="navbtn">
            <svg viewBox="0 0 28 28" width="28" height="28"><path d="M25 17a11.500 11.500 0 1 1-1-9" fill="none" stroke="#f1f3f4" stroke-width="3" /><path d="M26 1v10H16z" fill="#f1f3f4" /></svg>
          </span>
          <div class="omni">
            <svg viewBox="0 0 18 24" width="18" height="24"><path d="M4 10V6a5 5 0 0 1 10 0v4" fill="none" stroke="#c1c6ca" stroke-width="2" /><rect y="9" width="18" height="15" rx="2" fill="#c1c6ca" /></svg>
            <span class="url"><b>dashboard.4everland.org</b>/hosting/new?c=MSc-Project</span>
            <div class="omni-actions">
              <span><svg viewBox="0 0 24 28" width="24" height="28"><rect x="1.500" y="4" width="21" height="22.500" rx="2" fill="none" stroke="#c1c6ca" stroke-width="2.500" /><rect x="7" y="0" width="10" height="6" rx="1" fill="#c1c6ca" /></svg></span>
              <span><svg viewBox="0 0 24 30" width="24" height="30"><path d="M7 11H2v18h20V11h-5M12 20V2M6 8l6-6 6 6" fill="none" stroke="#c1c6ca" stroke-width="2.500" /></svg></span>
              <span><svg viewBox="0 0 30 30" width="30" height="30"><path d="M15 2l4 9 10 1-8 7 3 10-9-5-9 5 3-10-8-7 10-1z" fill="none" stroke="#dfe2e4" stroke-width="2.500" /></svg></span>
            </div>
          </div>
          <div class="exts">
            ${extensions.map((e) => html`<span class="ext">${e}</span>`)}
          </div>
        </div>
        <div class="page">
          <div class="content">
            ${this._renderHeader()}
            <div class="body">${this._renderSidebar()} ${this._renderMain()}</div>
          </div>
          <div class="scrollbar"><div class="thumb"></div></div>
        </div>
      </div>
    `;
  }
}
